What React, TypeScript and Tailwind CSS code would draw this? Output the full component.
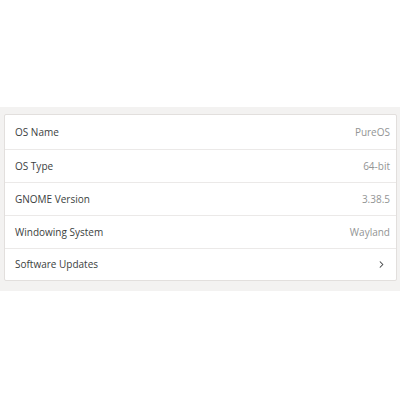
import { ChevronRight } from "lucide-react"

const rows = [
  { label: "OS Name", value: "PureOS" },
  { label: "OS Type", value: "64-bit" },
  { label: "GNOME Version", value: "3.38.5" },
  { label: "Windowing System", value: "Wayland" },
]

export default function App() {
  return (
    <div
      className="h-[400px] w-[400px] bg-white"
      style={{ fontFamily: '"Open Sans", "Noto Sans", sans-serif' }}
    >
      <div className="h-[107px]" />
      {/* about panel */}
      <div className="bg-[#f3f2f1] pt-[7px] pb-[10px] pl-[4px] pr-[3px]">
        <div className="rounded-[2px] border border-[#e2dfdd] bg-white">
          {rows.map((row, i) => (
            <div
              key={row.label}
              className={
                i === 0
                  ? "flex h-[35px] items-center justify-between border-b border-[#ebe9e8] pl-[10px] pr-[6px]"
                  : "flex h-[33px] items-center justify-between border-b border-[#ebe9e8] pl-[10px] pr-[6px]"
              }
            >
              <span className="text-[10px] text-[#3b3e40]">{row.label}</span>
              <span className="text-[10px] text-[#929494]">{row.value}</span>
            </div>
          ))}
          <div className="flex h-[31px] items-center justify-between pl-[10px] pr-[9px]">
            <span className="text-[10px] text-[#3b3e40]">Software Updates</span>
            <ChevronRight className="h-[11px] w-[11px] text-[#3a3d3e]" strokeWidth={2.2} />
          </div>
        </div>
      </div>
    </div>
  )
}
